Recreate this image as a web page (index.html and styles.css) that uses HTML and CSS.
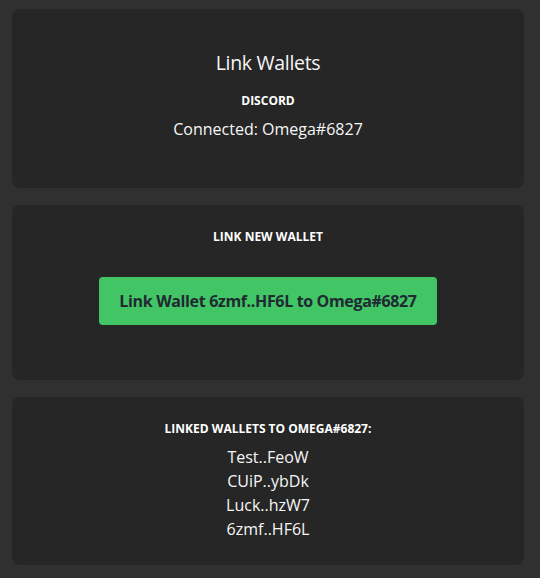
FILE: index.html
```html
<!DOCTYPE html>
<html lang="en">
<head>
<meta charset="utf-8">
<title>Link Wallets</title>
<link rel="stylesheet" href="styles.css">
</head>
<body>
<main class="page">
  <section class="card card-discord">
    <h1 class="title">Link Wallets</h1>
    <h2 class="label">DISCORD</h2>
    <p class="text">Connected: Omega#6827</p>
  </section>
  <section class="card card-link">
    <h2 class="label">LINK NEW WALLET</h2>
    <button class="btn" type="button">Link Wallet 6zmf..HF6L to Omega#6827</button>
  </section>
  <section class="card card-list">
    <h2 class="label">LINKED WALLETS TO OMEGA#6827:</h2>
    <ul class="wallets">
      <li class="text">Test..FeoW</li>
      <li class="text">CUiP..ybDk</li>
      <li class="text">Luck..hzW7</li>
      <li class="text">6zmf..HF6L</li>
    </ul>
  </section>
</main>
</body>
</html>
```
FILE: styles.css
```css
html, body {
  margin: 0;
  padding: 0;
  background: #303030;
}
body {
  font-family: "Open Sans", "Noto Sans", sans-serif;
  color: #f6f6f6;
}
.page {
  display: flex;
  flex-direction: column;
  gap: 17px;
  padding: 9px 16px 0 12px;
}
.card {
  background: #262626;
  border-radius: 8px;
  padding: 23px 0 24px;
  display: flex;
  flex-direction: column;
  align-items: center;
  text-align: center;
}
.title {
  margin: 17px 0 15px;
  font-size: 19.5px;
  line-height: 28px;
  font-weight: 400;
  letter-spacing: -0.3px;
  color: #f6f6f6;
}
.label {
  margin: 0;
  font-size: 12px;
  line-height: 18px;
  font-weight: 700;
  color: #ffffff;
}
.text {
  margin: 0;
  font-size: 16px;
  line-height: 24px;
  font-weight: 400;
}
.card-discord .label {
  margin-bottom: 7px;
}
.card-discord .text {
  margin-bottom: 23px;
}
.card-list .label {
  margin-bottom: 7px;
}
.btn {
  margin: 31px 0 31px;
  height: 48px;
  padding: 0 20px;
  border: none;
  border-radius: 4px;
  background: #41c565;
  color: #1f2a33;
  font-family: "Open Sans", "Noto Sans", sans-serif;
  font-size: 16px;
  font-weight: 700;
  letter-spacing: -0.35px;
  cursor: pointer;
}
.wallets {
  list-style: none;
  margin: 0;
  padding: 0;
}
```
